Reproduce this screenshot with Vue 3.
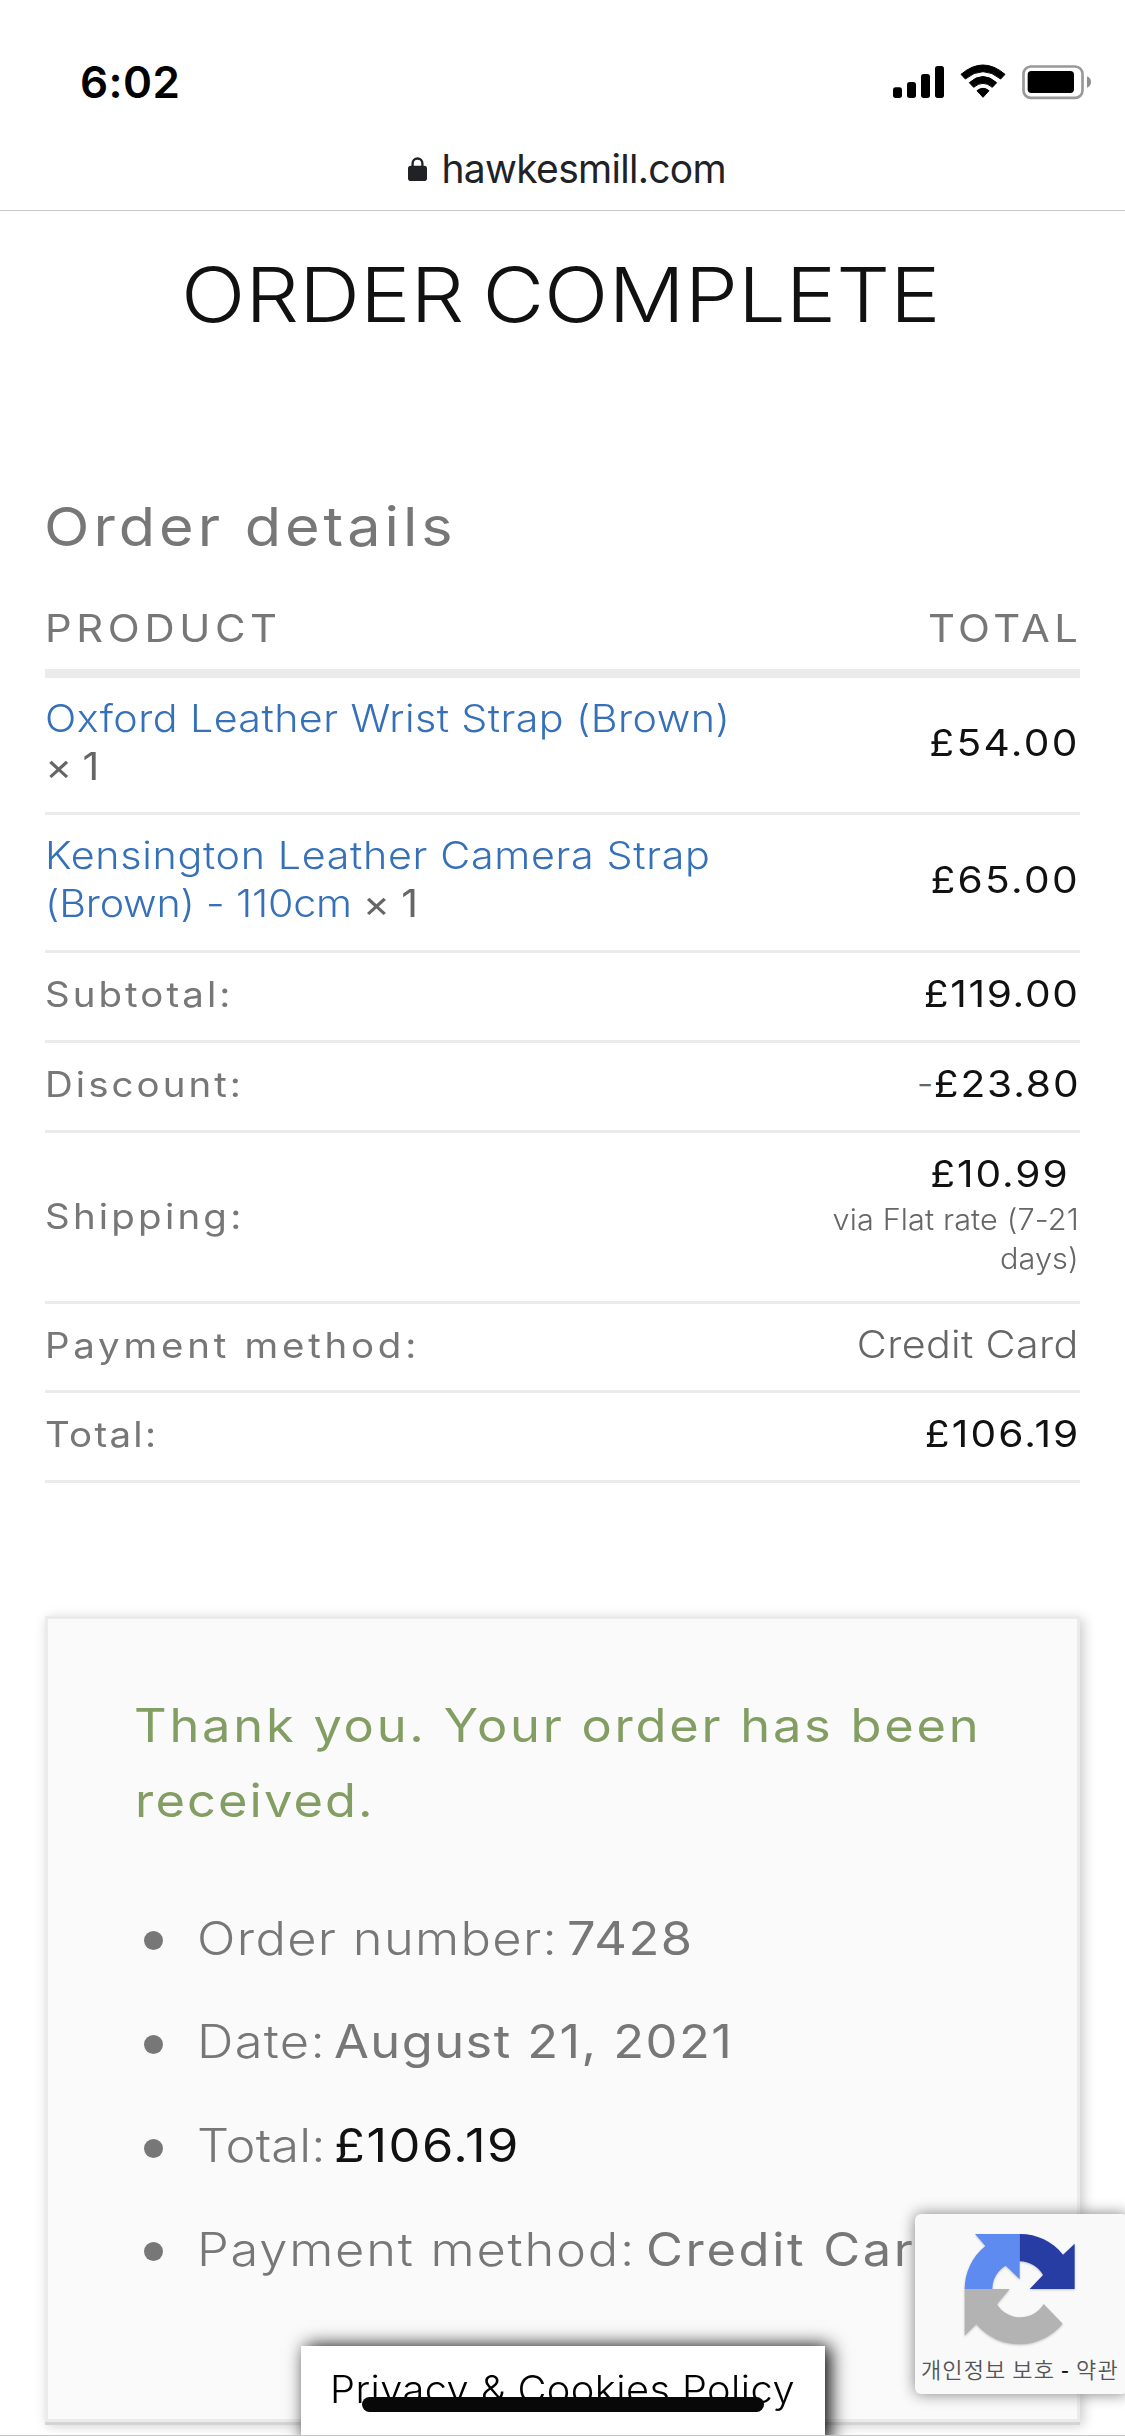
<script setup>
const products = [
  { lines: ['Oxford Leather Wrist Strap (Brown)', ''], price: '£54.00', key: 'oxford' },
  { lines: ['Kensington Leather Camera Strap', '(Brown) - 110cm'], price: '£65.00', key: 'kensington' }
]

const summary = [
  { label: 'Subtotal:', price: '£119.00', key: 'subtotal' },
  { label: 'Discount:', sign: '-', price: '£23.80', key: 'discount' },
  { label: 'Shipping:', price: '£10.99', notes: ['via Flat rate (7-21', 'days)'], key: 'shipping' },
  { label: 'Payment method:', text: 'Credit Card', key: 'payment' },
  { label: 'Total:', price: '£106.19', key: 'total' }
]

const overview = [
  { label: 'Order number:', value: '7428', key: 'number' },
  { label: 'Date:', value: 'August 21, 2021', key: 'date' },
  { label: 'Total:', value: '£106.19', key: 'sum' },
  { label: 'Payment method:', value: 'Credit Card', key: 'method' }
]
</script>

<template>
  <div class="screen">
    <header class="browser">
      <div class="status">
        <span class="clock">6:02</span>
        <svg class="status-icons" viewBox="90 66 615 120" width="205" height="40">
          <rect x="99" y="142" width="27" height="32" rx="8" />
          <rect x="141" y="126" width="27" height="48" rx="8" />
          <rect x="183" y="102" width="27" height="72" rx="8" />
          <rect x="225" y="78" width="27" height="96" rx="8" />
          <g stroke="#000" stroke-width="3" stroke-linejoin="round">
            <path d="M303 103Q369 47 435 103L422 117Q369 73 316 117Z" />
            <path d="M328 128Q369 91 410 128L397 142Q369 118 341 142Z" />
            <path d="M351 152Q369 138 387 152L369 172Z" />
          </g>
          <rect x="490.5" y="79.5" width="177" height="94" rx="22" fill="none" stroke="#999" stroke-width="8" />
          <rect x="503" y="93" width="139" height="66" rx="11" />
          <path d="M681 109Q693 114 693 126Q693 138 681 143Z" fill="#8f8f8f" />
        </svg>
      </div>
      <div class="address">
        <svg class="lock" viewBox="0 0 19 24" width="19" height="24">
          <path d="M4.6 10V6.4a4.9 4.9 0 0 1 9.8 0V10" fill="none" stroke="#212226" stroke-width="2.3" />
          <rect y="8.8" width="19" height="15.2" rx="2.8" fill="#212226" />
        </svg>
        <span class="host">hawkesmill.com</span>
      </div>
    </header>

    <main>
      <h1>ORDER COMPLETE</h1>

      <section class="details">
        <h2 class="wide">Order details</h2>
        <div class="head">
          <span class="wide">PRODUCT</span>
          <span class="head-total wide end">TOTAL</span>
        </div>
        <div v-for="p in products" :key="p.key" class="row product" :class="p.key">
          <div class="name wide">
            <div><a>{{ p.lines[0] }}</a></div>
            <div class="second"><a v-if="p.lines[1]">{{ p.lines[1] }}</a><span class="qty">× 1</span></div>
          </div>
          <span class="price wide end">{{ p.price }}</span>
        </div>
        <div v-for="s in summary" :key="s.key" class="row" :class="s.key">
          <span class="label wide">{{ s.label }}</span>
          <div class="value">
            <div v-if="s.price" class="amount"><span v-if="s.sign" class="sign">{{ s.sign }}</span><span class="price wide end">{{ s.price }}</span></div>
            <div v-if="s.text" class="plain wide end">{{ s.text }}</div>
            <div v-for="n in s.notes" :key="n" class="note">{{ n }}</div>
          </div>
        </div>
      </section>

      <section class="card">
        <p class="thanks wide">Thank you. Your order has been<br /><span>received.</span></p>
        <ul>
          <li v-for="o in overview" :key="o.key" :class="o.key">
            <i class="dot"></i><span class="term wide">{{ o.label }}</span><strong class="wide">{{ o.value }}</strong>
          </li>
        </ul>
      </section>
    </main>

    <aside class="captcha">
      <svg viewBox="250 126 345 348" width="115" height="116">
        <path fill="#b3b3b3" d="M255 297H390L352 343A82 82 0 0 0 492 342L549 401A168 168 0 0 1 290 403L255 437Z" />
        <path fill="#5d8bef" d="M286 132H420V268L378 227A82 82 0 0 0 338 297H255A165 165 0 0 1 317 168Z" />
        <path fill="#283da4" d="M420 132A165 165 0 0 1 550 194L585 161V297H450L490 255A82 82 0 0 0 420 214Z" />
      </svg>
      <div class="terms">개인정보 보호 <b>-</b> 약관</div>
    </aside>

    <div class="cookies"><span>Privacy &amp; Cookies Policy</span></div>
    <div class="home-bar"></div>
    <div class="edge"></div>
  </div>
</template>

<style>
body {
  background: #fff;
}
</style>

<style scoped>
.screen {
  position: relative;
  width: 1125px;
  height: 2436px;
  overflow: hidden;
  background: #fff;
  font-family: Inter, "Noto Sans CJK KR", sans-serif;
  color: #777;
  white-space: nowrap;
}
/* Broad letterforms for the shop's typography */
.wide {
  transform: scaleX(1.1);
  transform-origin: left center;
}
.wide.end {
  transform-origin: right center;
}
.browser {
  box-sizing: border-box;
  height: 211px;
  padding-top: 52px;
  border-bottom: 1px solid #c8c8c8;
}
.status {
  display: flex;
  align-items: center;
  justify-content: space-between;
  height: 60px;
  padding: 0 30px 0 80px;
}
.clock {
  font-size: 44px;
  font-weight: 600;
  line-height: 60px;
  letter-spacing: 0.43px;
  color: #000;
}
.address {
  display: flex;
  align-items: center;
  margin-top: 32px;
  padding-left: 408px;
}
.lock {
  margin-right: 14.5px;
}
.host {
  font-size: 39px;
  line-height: 50px;
  letter-spacing: -0.7px;
  color: #212226;
}
h1 {
  margin: 39px 0 0 181px;
  font-size: 75px;
  font-weight: 350;
  line-height: 90px;
  letter-spacing: 0;
  word-spacing: -5px;
  color: #111;
  transform: scaleX(1.13);
  transform-origin: left center;
}
.details {
  margin: 155px 45px 0;
}
h2 {
  margin: 0 0 44px -1px;
  font-size: 54px;
  font-weight: 400;
  line-height: 64px;
  letter-spacing: 3.6px;
}
.head {
  display: flex;
  justify-content: space-between;
  height: 66px;
  border-bottom: 9px solid #ebebeb;
  font-size: 38px;
  line-height: 50px;
  letter-spacing: 4.2px;
}
.head-total {
  margin-right: -2px;
  letter-spacing: 4px;
}
.row {
  display: flex;
  align-items: center;
  justify-content: space-between;
  box-sizing: border-box;
  height: 90px;
  padding: 17px 0 22px;
  border-bottom: 3px solid #ebebeb;
  line-height: 48px;
}
.row.product {
  height: 137px;
  padding: 17px 0 21px;
}
.row.product.kensington {
  height: 138px;
  padding: 16.5px 0 21.5px;
  line-height: 48.5px;
}
.row.shipping {
  height: 171px;
  padding-bottom: 24px;
}
.row.payment {
  height: 89px;
  padding: 17px 0 21px;
}
.name {
  font-size: 37.5px;
  font-weight: 350;
  letter-spacing: 0.37px;
}
.kensington .name {
  letter-spacing: 0.6px;
}
.second {
  display: flex;
  gap: 9px;
}
.kensington .second {
  letter-spacing: -0.2px;
}
.name a {
  color: #3670b8;
}
.qty {
  margin-left: 1px;
  font-weight: 400;
  color: #666;
}
.oxford .qty {
  margin-left: 0;
  letter-spacing: -0.6px;
}
.price {
  display: inline-block;
  font-size: 37px;
  font-weight: 400;
  letter-spacing: 2.1px;
  color: #111;
}
.label {
  font-size: 35px;
  letter-spacing: 2.75px;
}
.shipping .label {
  margin-top: 4px;
  letter-spacing: 2.9px;
}
.payment .label {
  letter-spacing: 3.4px;
}
.total .label {
  letter-spacing: 2.04px;
}
.value {
  text-align: right;
}
.amount {
  font-size: 37px;
}
.subtotal .price {
  letter-spacing: 1.5px;
}
.discount .price {
  letter-spacing: 1.7px;
}
.sign {
  margin-right: 13px;
  font-weight: 350;
  color: #666;
}
.shipping .price {
  margin-right: 10px;
  letter-spacing: 1.7px;
}
.total .price {
  letter-spacing: 1.9px;
}
.plain {
  margin-right: 1px;
  font-size: 37.5px;
  font-weight: 350;
  letter-spacing: 0.3px;
  color: #666;
}
.note {
  position: relative;
  top: 1.5px;
  margin-right: 1px;
  font-size: 29.5px;
  font-weight: 350;
  line-height: 39.3px;
  letter-spacing: 0.1px;
  color: #666;
  transform: scaleX(1.04);
  transform-origin: right center;
}
.card {
  box-sizing: border-box;
  height: 806px;
  margin: 133px 45px 0;
  padding: 69px 0 0 86px;
  border: 3px solid #ebebeb;
  background: #fafafa;
  box-shadow: 0 3px 0 #d4d4d4, 3px 3px 12px rgba(0, 0, 0, 0.22);
}
.thanks {
  margin: 0;
  font-size: 46px;
  line-height: 75px;
  letter-spacing: 2.5px;
  color: #839e63;
}
.thanks span {
  margin-left: 1px;
  letter-spacing: 1.9px;
}
ul {
  margin: 48.5px 0 0;
  padding: 0 0 0 10px;
  list-style: none;
}
li {
  display: flex;
  align-items: center;
  height: 103.7px;
  font-size: 46px;
  line-height: 103.7px;
}
.dot {
  width: 19px;
  height: 19px;
  margin: 5px 34px 0 0;
  border-radius: 50%;
  background: #777;
}
.term {
  font-weight: 330;
  letter-spacing: 1.2px;
}
strong {
  margin-left: 42px;
  font-weight: 440;
  letter-spacing: 1.4px;
}
.date strong {
  margin-left: 20px;
  letter-spacing: 1.3px;
}
.sum .term {
  letter-spacing: 0.2px;
}
.sum strong {
  margin-left: 19.5px;
  color: #111;
}
.method .term {
  letter-spacing: 1.6px;
}
.method strong {
  margin-left: 50px;
  letter-spacing: 2.4px;
}
.captcha {
  position: absolute;
  top: 2214px;
  left: 915px;
  width: 213px;
  height: 180px;
  border-radius: 6px;
  background: #f9f9f9;
  box-shadow: 0 0 15px #808080;
}
.captcha svg {
  display: block;
  margin: 18px 0 0 48px;
  filter: drop-shadow(0 1px 1px rgba(0, 0, 0, 0.2));
}
.terms {
  margin: 0 0 0 6px;
  font-family: "Noto Sans CJK KR", sans-serif;
  font-size: 22px;
  font-weight: 350;
  line-height: 40px;
  letter-spacing: 1.1px;
  color: #555;
}
.terms b {
  font-weight: 500;
  color: #111;
}
.cookies {
  position: absolute;
  top: 2346px;
  left: 301px;
  box-sizing: border-box;
  width: 524px;
  height: 100px;
  padding: 14px 0 0 29px;
  background: #fff;
  box-shadow: 5px 0 18px #000;
  font-size: 37.5px;
  font-weight: 350;
  line-height: 60px;
  letter-spacing: 0.4px;
  color: #000;
}
.cookies span {
  display: inline-block;
  transform: scaleX(1.06);
  transform-origin: left center;
}
.home-bar {
  position: absolute;
  top: 2397px;
  left: 362px;
  width: 402px;
  height: 15px;
  border-radius: 8px;
  background: #080808;
}
.edge {
  position: absolute;
  top: 2435px;
  left: 0;
  width: 1125px;
  height: 1px;
  background: #c4c4c4;
}
</style>
